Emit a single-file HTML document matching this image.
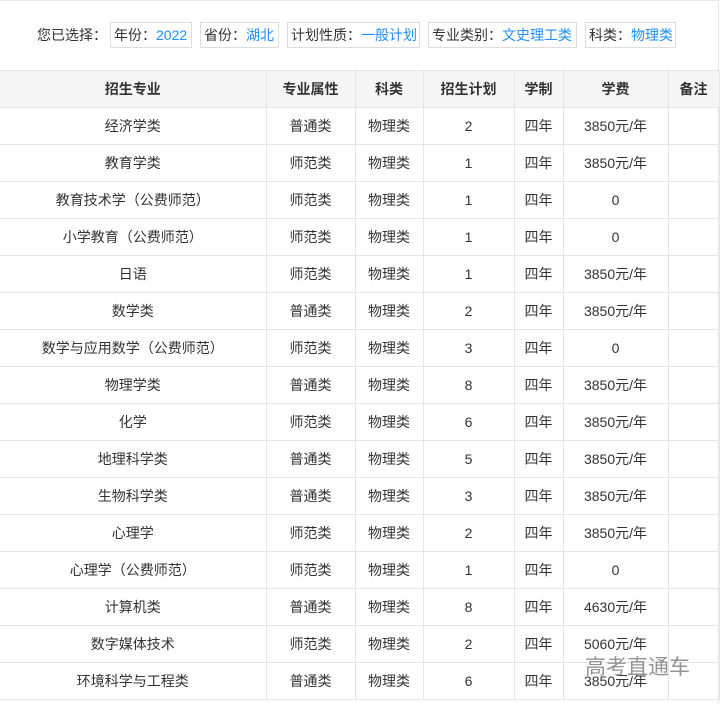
<!DOCTYPE html>
<html><head><meta charset="utf-8"><style>
body{margin:0;width:721px;height:704px;overflow:hidden;background:#fff;font-family:"Liberation Sans","Noto Sans CJK SC",sans-serif;font-size:14px;color:#333;position:relative}
.outer{position:absolute;left:0;top:0;width:719px;height:704px;border-top:1px solid #e8e8e8;border-right:1px solid #e8e8e8;box-sizing:border-box}
.sel{position:absolute;top:22px;left:37px;height:26px;display:flex;align-items:center;font-size:14px}
.tag{position:absolute;top:22px;height:26px;border:1px solid #ddd;box-sizing:border-box;line-height:24px;padding-left:3px;font-size:14px;white-space:nowrap}
.tag b{font-weight:normal;color:#1e90ff}
table{position:absolute;left:0;top:70px;border-collapse:collapse;table-layout:fixed;width:719px}
td,th{border:1px solid #e6e6e6;height:36px;padding:0;text-align:center;font-size:14px;line-height:16px}
td{padding-top:0;vertical-align:middle}
th{background:#f5f5f5;font-weight:bold;color:#333}
tr td:first-child,tr th:first-child{border-left:none}
.wm{position:absolute;left:585px;top:651px;font-size:21px;color:#888;opacity:.9}
</style></head><body>
<div class="outer"></div>
<div class="sel">您已选择：</div>
<div class="tag" style="left:110px;width:82px">年份：<b>2022</b></div>
<div class="tag" style="left:200px;width:79px">省份：<b>湖北</b></div>
<div class="tag" style="left:287px;width:133px">计划性质：<b>一般计划</b></div>
<div class="tag" style="left:428px;width:149px">专业类别：<b>文史理工类</b></div>
<div class="tag" style="left:585px;width:91px">科类：<b>物理类</b></div>
<table>
<colgroup><col style="width:266px"><col style="width:89px"><col style="width:68px"><col style="width:91px"><col style="width:49px"><col style="width:105px"><col style="width:51px"></colgroup>
<tr><th>招生专业</th><th>专业属性</th><th>科类</th><th>招生计划</th><th>学制</th><th>学费</th><th>备注</th></tr>
<tr><td>经济学类</td><td>普通类</td><td>物理类</td><td>2</td><td>四年</td><td>3850元/年</td><td></td></tr>
<tr><td>教育学类</td><td>师范类</td><td>物理类</td><td>1</td><td>四年</td><td>3850元/年</td><td></td></tr>
<tr><td>教育技术学（公费师范）</td><td>师范类</td><td>物理类</td><td>1</td><td>四年</td><td>0</td><td></td></tr>
<tr><td>小学教育（公费师范）</td><td>师范类</td><td>物理类</td><td>1</td><td>四年</td><td>0</td><td></td></tr>
<tr><td>日语</td><td>师范类</td><td>物理类</td><td>1</td><td>四年</td><td>3850元/年</td><td></td></tr>
<tr><td>数学类</td><td>普通类</td><td>物理类</td><td>2</td><td>四年</td><td>3850元/年</td><td></td></tr>
<tr><td>数学与应用数学（公费师范）</td><td>师范类</td><td>物理类</td><td>3</td><td>四年</td><td>0</td><td></td></tr>
<tr><td>物理学类</td><td>普通类</td><td>物理类</td><td>8</td><td>四年</td><td>3850元/年</td><td></td></tr>
<tr><td>化学</td><td>师范类</td><td>物理类</td><td>6</td><td>四年</td><td>3850元/年</td><td></td></tr>
<tr><td>地理科学类</td><td>普通类</td><td>物理类</td><td>5</td><td>四年</td><td>3850元/年</td><td></td></tr>
<tr><td>生物科学类</td><td>普通类</td><td>物理类</td><td>3</td><td>四年</td><td>3850元/年</td><td></td></tr>
<tr><td>心理学</td><td>师范类</td><td>物理类</td><td>2</td><td>四年</td><td>3850元/年</td><td></td></tr>
<tr><td>心理学（公费师范）</td><td>师范类</td><td>物理类</td><td>1</td><td>四年</td><td>0</td><td></td></tr>
<tr><td>计算机类</td><td>普通类</td><td>物理类</td><td>8</td><td>四年</td><td>4630元/年</td><td></td></tr>
<tr><td>数字媒体技术</td><td>师范类</td><td>物理类</td><td>2</td><td>四年</td><td>5060元/年</td><td></td></tr>
<tr><td>环境科学与工程类</td><td>普通类</td><td>物理类</td><td>6</td><td>四年</td><td>3850元/年</td><td></td></tr>
</table>
<div class="wm">高考直通车</div>
</body></html>
